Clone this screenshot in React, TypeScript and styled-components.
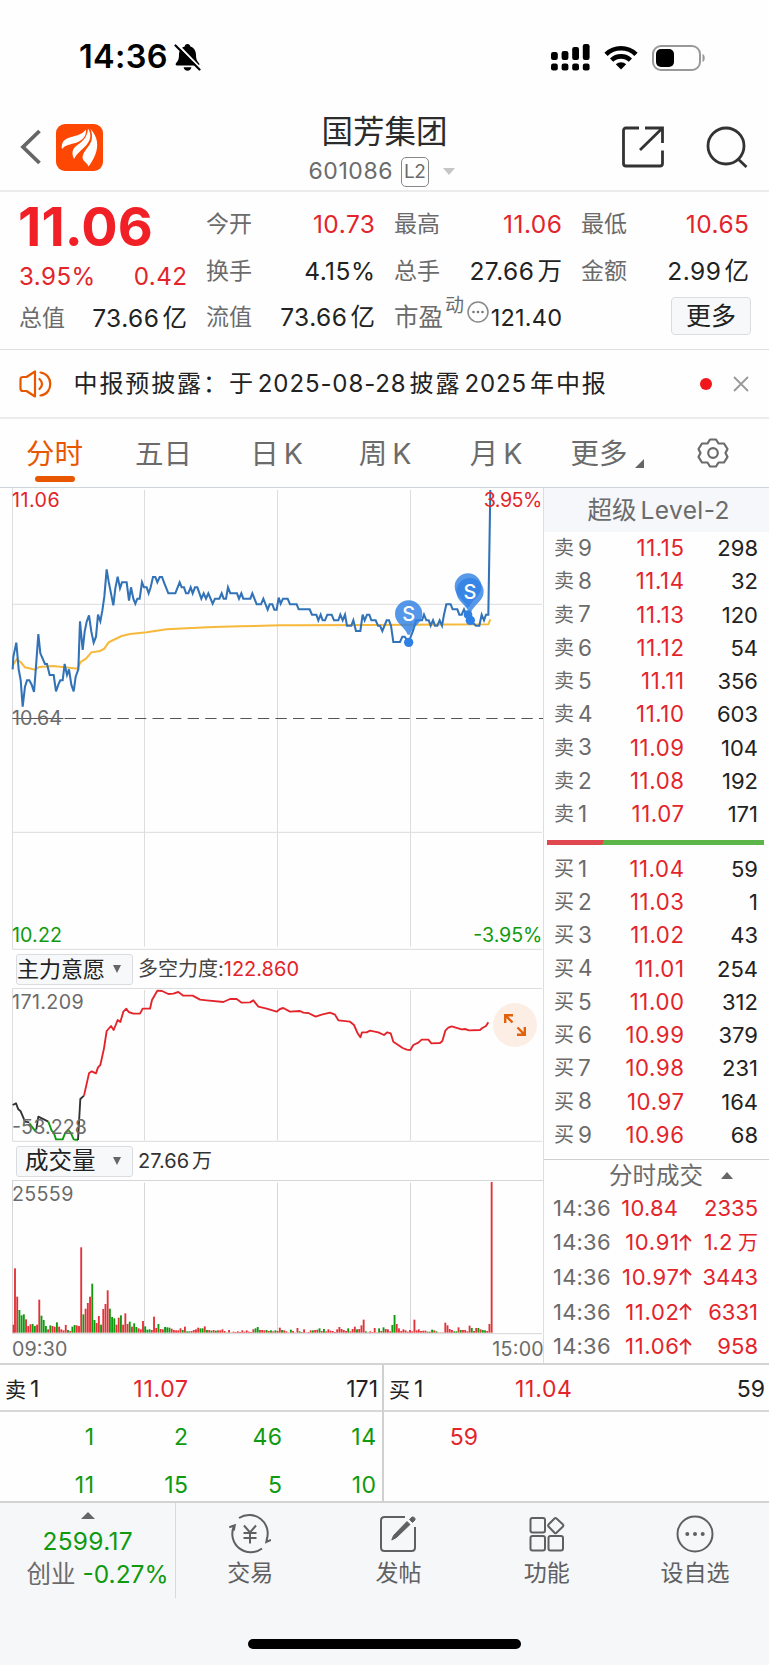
import React from "react";
import styled, { createGlobalStyle } from "styled-components";

const RED = "#e3242b";
const GREEN = "#0f9a0f";
const GREY = "#6b6b6b";
const DARK = "#222222";
const ORANGE = "#e85700";

const GlobalStyle = createGlobalStyle`
  * { box-sizing: border-box; }
  body { margin: 0; background: #fff; }
`;

const Page = styled.div`
  width: 769px;
  height: 1665px;
  display: flex;
  flex-direction: column;
  overflow: hidden;
  background: #fefefe;
  color: ${DARK};
  font-family: Inter, "Noto Sans CJK SC", sans-serif;
  white-space: nowrap;
`;

const Txt = styled.span<{ $c?: string; $s?: number; $ls?: number; $w?: number }>`
  color: ${(p) => p.$c ?? DARK};
  font-size: ${(p) => p.$s ?? 22}px;
  letter-spacing: ${(p) => p.$ls ?? 0}px;
  margin-right: ${(p) => -(p.$ls ?? 0)}px;
  font-weight: ${(p) => p.$w ?? 400};
  line-height: 1;
`;

/* ---------- status bar ---------- */
const StatusBar = styled.div`
  height: 100px;
  flex: none;
  display: flex;
  align-items: center;
  padding: 15px 63px 0 79px;
`;
const StatusIcons = styled.div`
  margin-left: auto;
  display: flex;
  align-items: center;
  gap: 14px;
`;
const BellIcon = styled.svg`
  margin-left: 7px;
`;

/* ---------- title bar ---------- */
const TitleBar = styled.div`
  height: 92px;
  flex: none;
  display: grid;
  grid-template-columns: 200px 1fr 200px;
  border-bottom: 2px solid #ececec;
`;
const TitleLeft = styled.div`
  display: flex;
  align-items: center;
  gap: 14px;
  padding: 4px 0 0 20px;
`;
const TitleMid = styled.div`
  display: flex;
  flex-direction: column;
  align-items: center;
  padding-top: 16px;
`;
const CodeRow = styled.div`
  display: flex;
  align-items: center;
  height: 30px;
  margin-top: 9px;
  padding-right: 6px;
`;
const LevelTag = styled.span`
  width: 28px;
  height: 30px;
  margin: 0 14px 0 8px;
  border: 1.5px solid #888;
  border-radius: 5px;
  color: ${GREY};
  font-size: 19px;
  line-height: 28px;
  text-align: center;
  letter-spacing: -0.5px;
`;
const TitleRight = styled.div`
  display: flex;
  align-items: center;
  justify-content: flex-end;
  gap: 42px;
  padding: 4px 21px 0 0;
`;
const Triangle = styled.i<{ $up?: boolean; $w: number; $h: number; $c: string }>`
  width: 0;
  height: 0;
  border-left: ${(p) => p.$w / 2}px solid transparent;
  border-right: ${(p) => p.$w / 2}px solid transparent;
  ${(p) => (p.$up ? "border-bottom" : "border-top")}: ${(p) => p.$h}px solid ${(p) => p.$c};
`;

/* ---------- quote ---------- */
const Quote = styled.div`
  height: 158px;
  flex: none;
  display: grid;
  grid-template-columns: 168px 169px 168px 168px;
  column-gap: 19px;
  padding: 9px 19px 0 19px;
  border-bottom: 1px solid #dedede;
`;
const QuoteCol = styled.div`
  display: flex;
  flex-direction: column;
`;
const QuoteRow = styled.div<{ $h?: number }>`
  height: ${(p) => p.$h ?? 46.7}px;
  display: flex;
  align-items: center;
  justify-content: space-between;
`;
const LastPrice = styled.div`
  height: 51px;
  margin-left: -1px;
  line-height: 51px;
  font-size: 54px;
  font-weight: 700;
  letter-spacing: 0.1px;
  color: #f02026;
`;
const Unit = styled.span`
  margin-left: 3px;
`;
const PeLabel = styled.span`
  display: flex;
  align-items: center;
`;
const PeSup = styled.span`
  font-size: 19px;
  line-height: 1;
  color: ${GREY};
  margin: -24px 3px 0 2px;
`;
const PeIcon = styled.svg`
  margin-top: -12px;
`;
const MoreButton = styled.button`
  width: 80px;
  height: 38px;
  margin: -4px -2px 0 auto;
  padding: 0;
  border: 1px solid #dcdcdc;
  border-radius: 4px;
  background: #f7f8f9;
  color: ${DARK};
  font: 25px/34px Inter, "Noto Sans CJK SC", sans-serif;
`;

/* ---------- notice ---------- */
const Notice = styled.div`
  height: 69px;
  flex: none;
  display: flex;
  align-items: center;
  padding: 0 20px 0 19px;
  border-bottom: 2px solid #ececec;
`;
const NoticeText = styled.div`
  margin-left: 21.5px;
  font-size: 24px;
  line-height: 30px;
  letter-spacing: 1.9px;
`;
const Dot = styled.i`
  width: 12px;
  height: 12px;
  border-radius: 50%;
  background: #f0161c;
  margin: 0 21px 0 auto;
`;
const Gap = styled.span`
  margin: 0 3px;
  letter-spacing: 0.9px;
`;

/* ---------- tabs ---------- */
const Tabs = styled.div`
  height: 69px;
  flex: none;
  display: flex;
  align-items: center;
  border-bottom: 1px solid #cfd3da;
`;
const Tab = styled.div<{ $w: number; $active?: boolean }>`
  position: relative;
  width: ${(p) => p.$w}px;
  height: 68px;
  line-height: 70px;
  text-align: center;
  font-size: 28.5px;
  color: ${(p) => (p.$active ? ORANGE : GREY)};
  &::after {
    content: "";
    display: ${(p) => (p.$active ? "block" : "none")};
    position: absolute;
    left: 35px;
    bottom: 5px;
    width: 40px;
    height: 6px;
    border-radius: 3px;
    background: ${ORANGE};
  }
`;
const TabIcon = styled.div`
  width: 112px;
  display: flex;
  justify-content: center;
`;
const TabLatin = styled.span`
  margin-left: 5px;
`;
const CornerMark = styled.svg`
  margin: 0 0 -4px 7px;
`;

/* ---------- main ---------- */
const Main = styled.div`
  height: 875px;
  flex: none;
  display: flex;
`;
const Charts = styled.div`
  width: 544px;
  display: flex;
  flex-direction: column;
  position: relative;
  border-right: 1px solid #dcdde0;
`;
const ChartSvg = styled.svg`
  display: block;
  flex: none;
`;
const IndicatorRow = styled.div`
  height: 38px;
  flex: none;
  display: flex;
  align-items: center;
  padding-left: 16px;
`;
const Selector = styled.div<{ $pad: number }>`
  width: 117px;
  height: 31px;
  padding: 0 11px 1px ${(p) => p.$pad}px;
  margin-right: 5px;
  display: flex;
  align-items: center;
  justify-content: space-between;
  border: 1px solid #dadce0;
  border-radius: 3px;
  background: #f7f8fa;
`;
const ExpandButton = styled.button`
  position: absolute;
  left: 493px;
  top: 515px;
  width: 44px;
  height: 44px;
  padding: 0;
  border: 0;
  border-radius: 50%;
  background: #fdeee5;
`;

/* ---------- order book ---------- */
const Book = styled.div`
  flex: 1;
  display: flex;
  flex-direction: column;
`;
const BookTitle = styled.div`
  height: 43.5px;
  flex: none;
  display: flex;
  align-items: center;
  justify-content: center;
  gap: 4px;
  padding: 0 0 0 4px;
  background: #f5f7fb;
`;
const BookRow = styled.div`
  height: 33.25px;
  flex: none;
  display: grid;
  grid-template-columns: 40px 90px 1fr;
  align-items: center;
  padding: 0 11px 0 10px;
  & > :nth-child(n + 2) { text-align: right; }
`;
const Side = styled.span`
  display: flex;
  align-items: center;
  gap: 4px;
`;
const Ratio = styled.div`
  height: 5px;
  flex: none;
  margin: 9px 5px 7.5px 3px;
  background: linear-gradient(110deg, #e0484f 26%, #5cb548 26%);
`;
const TradesTitle = styled.div`
  height: 31.500px;
  flex: none;
  margin-top: 7.500px;
  display: flex;
  align-items: center;
  gap: 18px;
  padding-left: 65px;
  border-top: 1px solid #cfd0d3;
`;
const TradeRow = styled.div`
  height: 34.6px;
  flex: none;
  display: grid;
  grid-template-columns: 58px 1fr 61px;
  align-items: center;
  padding: 0 11px 0 9px;
  & > :last-child { text-align: right; }
`;
const TradePrice = styled.span<{ $up: boolean }>`
  padding-right: ${(p) => (p.$up ? 5 : 19)}px;
  display: flex;
  align-items: center;
  justify-content: flex-end;
`;

/* ---------- queue ---------- */
const Queue = styled.div`
  height: 140px;
  flex: none;
  display: grid;
  grid-template-columns: 384px 385px;
  border-top: 2px solid #d3d3d3;
  border-bottom: 2px solid #d3d3d3;
`;
const QueueSide = styled.div<{ $line?: boolean }>`
  border-right: ${(p) => (p.$line ? 2 : 0)}px solid #d0d0d0;
`;
const QueueHead = styled.div`
  height: 47px;
  display: grid;
  grid-template-columns: 60px 123px 1fr;
  align-items: center;
  padding: 3px 4px 0 5px;
  border-bottom: 2px solid #d8d8d8;
  & > :nth-child(n + 2) { text-align: right; }
`;
const QueueGrid = styled.div`
  display: grid;
  grid-template-columns: repeat(4, 94px);
  grid-auto-rows: 48px;
  align-items: center;
  padding-top: 1px;
  text-align: right;
`;

/* ---------- bottom nav ---------- */
const Nav = styled.div`
  flex: 1;
  display: flex;
  flex-direction: column;
  align-items: center;
  background: #f6f7f9;
`;
const NavItems = styled.div`
  width: 769px;
  height: 95px;
  display: grid;
  grid-template-columns: 176px repeat(4, 148.25px);
`;
const IndexBox = styled.div`
  display: flex;
  flex-direction: column;
  align-items: center;
  padding-top: 9px;
  border-right: 1px solid #d9dadd;
`;
const IndexValue = styled.div`
  height: 34px;
  padding-top: 10px;
  display: flex;
`;
const IndexChange = styled.div`
  display: flex;
  align-items: center;
  gap: 7px;
  height: 34px;
  margin-top: 4px;
  padding-left: 20px;
`;
const NavItem = styled.div`
  display: flex;
  flex-direction: column;
  align-items: center;
  padding-top: 10px;
  gap: 7px;
`;
const HomeBar = styled.i`
  width: 273px;
  height: 10px;
  margin-top: 41px;
  border-radius: 5px;
  background: #000;
`;

/* ---------- data ---------- */
const sells = [
  ["9", "11.15", "298"], ["8", "11.14", "32"], ["7", "11.13", "120"],
  ["6", "11.12", "54"], ["5", "11.11", "356"], ["4", "11.10", "603"],
  ["3", "11.09", "104"], ["2", "11.08", "192"], ["1", "11.07", "171"],
];
const buys = [
  ["1", "11.04", "59"], ["2", "11.03", "1"], ["3", "11.02", "43"],
  ["4", "11.01", "254"], ["5", "11.00", "312"], ["6", "10.99", "379"],
  ["7", "10.98", "231"], ["8", "10.97", "164"], ["9", "10.96", "68"],
];
const trades: [string, boolean, string, string][] = [
  ["10.84", false, "2335", ""], ["10.91", true, "1.2", "万"],
  ["10.97", true, "3443", ""], ["11.02", true, "6331", ""], ["11.06", true, "958", ""],
];

const priceLine =
  "38,568 40,530 49,488 56,568 62,600 68,680 75,620 81,601 88,601 95,614 102,636 108,560 115,462 121,520 128,536 135,552 141,552 149,585 161,585 168,634 175,614 181,601 188,601 194,552 201,585 207,568 214,614 221,634 227,590 235,568 240,424 248,510 254,455 260,425 267,406 274,455 281,488 288,470 294,404 301,424 307,392 313,350 320,268 326,305 333,340 340,376 346,325 353,290 360,325 366,307 380,307 387,362 393,322 400,356 406,371 412,356 419,356 426,307 432,322 440,322 446,340 452,322 459,291 466,291 472,307 479,291 486,291 492,307 505,340 526,340 539,307 545,322 552,322 558,340 565,340 572,322 578,340 585,322 592,322 604,356 611,340 618,356 625,340 638,371 645,356 658,356 665,340 671,356 678,356 684,322 691,340 711,340 717,356 724,340 730,356 751,356 757,340 770,373 783,373 790,356 803,389 809,373 817,373 823,389 830,389 836,353 842,371 849,356 863,356 870,373 890,373 896,388 929,388 936,404 949,404 955,421 962,404 968,421 975,421 982,404 995,404 1002,421 1015,421 1021,404 1028,421 1035,404 1041,437 1054,437 1060,421 1068,453 1081,453 1088,404 1094,421 1101,404 1108,404 1114,421 1127,421 1134,437 1140,437 1147,453 1160,421 1167,421 1173,437 1180,486 1200,486 1207,470 1214,470 1226,487 1234,465 1240,450 1248,421 1266,421 1272,404 1279,421 1286,421 1292,437 1299,421 1305,437 1312,437 1319,421 1326,437 1332,404 1339,373 1352,373 1358,388 1372,388 1378,404 1385,404 1392,388 1399,404 1410,421 1428,437 1438,437 1445,404 1452,421 1458,404 1465,404 1471,30";
const averageLine =
  "38,556 50,538 62,546 75,562 105,569 118,561 160,558 232,566 242,546 258,536 274,517 300,513 313,506 326,487 340,480 365,468 390,462 440,457 500,448 560,445 640,441 720,439 840,436 900,436 1110,435 1230,434 1465,433 1471,418";

const forceSegments = [
  { c: "#333", p: "38,555 48,550 55,568 62,574 75,605 88,607" },
  { c: GREEN, p: "88,610 105,632 109,628" },
  { c: "#333", p: "109,628 115,590 145,605" },
  { c: GREEN, p: "145,605 155,632 161,637 168,658 188,658 195,640 205,630 212,638 221,658 234,660" },
  { c: "#333", p: "234,660 241,537 252,527" },
  {
    c: RED,
    p: "252,527 267,460 275,454 288,460 294,442 301,435 312,385 320,333 333,318 341,330 353,300 361,306 370,275 379,266 386,276 400,281 420,281 428,266 450,266 456,240 472,212 486,213 505,222 520,221 535,216 550,227 578,227 600,239 620,241 670,246 690,237 710,237 725,248 750,247 760,241 775,260 800,266 830,275 840,267 850,264 870,275 900,273 910,278 925,279 947,290 965,284 990,278 1005,284 1015,301 1050,305 1062,315 1073,340 1081,352 1086,337 1100,337 1110,332 1135,337 1152,345 1162,337 1172,340 1180,365 1208,384 1220,389 1231,390 1240,375 1255,368 1265,359 1285,359 1294,370 1320,369 1327,363 1336,332 1345,323 1355,319 1385,328 1395,327 1407,331 1440,330 1447,324 1458,318 1465,307",
  },
];

const volumes = (
  "r24 r193 r108 g68 g52 g55 r40 r20 r25 g26 g20 r24 r99 g51 g38 g20 r10 g22 r20 r18 " +
  "g31 r18 r10 r7 r23 g8 r5 g18 g23 r22 r20 r256 g55 r72 r89 r108 g147 g38 r29 r50 " +
  "g24 r71 r86 r127 g72 g47 g43 r24 r45 g52 r24 r58 r26 g33 r18 g28 g17 r13 r10 r35 " +
  "g19 g9 g10 r8 r48 r14 g26 r11 r10 g17 g16 g15 r12 r8 r7 r7 r13 g8 r18 g4 " +
  "g4 r5 r8 r10 r15 g13 g13 r19 g8 r8 g6 r8 g6 r7 r7 r10 r5 g1 r8 r1 " +
  "r3 r2 r4 r2 r7 r3 r7 r3 r2 r10 g13 g17 r8 r8 r7 g8 r5 g7 r4 g7 " +
  "r5 r15 g8 r7 r4 r1 g9 r5 r1 r14 g4 r2 r10 r1 r2 r7 g7 r8 r9 g13 " +
  "r5 g11 r4 r10 r6 r5 r2 r10 r17 r11 r8 r5 g13 r4 r11 r18 g10 r11 r22 r39 " +
  "g4 r1 r4 r2 r14 r1 g13 r5 g16 r11 r10 r4 g23 g53 r26 r13 r5 r10 r7 r3 " +
  "r8 r4 r39 r7 r10 r5 r6 r6 g3 r3 g9 r7 g4 r1 r1 r1 r30 r22 r11 r8 " +
  "g4 g4 r16 g8 r8 r8 r4 r21 g14 r5 r14 g14 r10 g8 g7 r5 r26 r452"
).split(" ");

const gridX = [433.5, 832.5, 1231.5];

/* ---------- pieces ---------- */
type LabelProps = { x: number; y: number; w: number; c?: string; children: string };
const Label = ({ x, y, w, c = GREY, children }: LabelProps) => (
  <text x={x} y={y} textLength={w} fill={c} fontSize={59}>{children}</text>
);

const Pin = ({ x, y, r, tip, o }: { x: number; y: number; r: number; tip: number; o: number }) => (
  <path
    d={`M${x - r} ${y}A${r} ${r} 0 1 1 ${x + r} ${y}C${x + r} ${y + 28} ${x + 12} ${y + 38} ${x + 3} ${y + tip}H${x - 3}C${x - 12} ${y + 38} ${x - r} ${y + 28} ${x - r} ${y}Z`}
    fill="#2f80e4"
    opacity={o}
  />
);

const PriceChart = () => (
  <ChartSvg width="543" height="462" viewBox="0 24 1629 1386">
    <g stroke="#dddddf" strokeWidth="3">
      <path d="M37.5 24V1408M37 373H1626M37 1057H1626M37 1408H1626" />
      {gridX.map((x) => <path key={x} d={`M${x} 30V1400`} />)}
    </g>
    <path d="M37 715.5H190" stroke="#555" strokeWidth="3" />
    <path d="M194 715.5H1629" stroke="#555" strokeWidth="3.4" strokeDasharray="34 18.7" />
    <polyline points={averageLine} fill="none" stroke="#f6b93b" strokeWidth="6" />
    <polyline points={priceLine} fill="none" stroke="#3273b8" strokeWidth="6.2" strokeLinejoin="miter" />
    <Pin x={1226} y={402} r={41} tip={62} o={0.82} />
    <circle cx="1226" cy="487" r="14" fill="#2f80e4" />
    <circle cx="1404" cy="404" r="13" fill="#2f80e4" />
    <circle cx="1411" cy="421" r="14" fill="#2f80e4" />
    <Pin x={1404} y={320} r={40} tip={62} o={0.8} />
    <Pin x={1410} y={335} r={41} tip={62} o={0.8} />
    <g fill="#fff" fontSize="60" fontWeight="500" textAnchor="middle">
      <text x="1226" y="423">S</text>
      <text x="1410" y="357">S</text>
    </g>
    <Label x={36} y={81} w={143} c={RED}>11.06</Label>
    <Label x={1451} y={81} w={176} c={RED}>3.95%</Label>
    <Label x={36} y={735} w={150}>10.64</Label>
    <Label x={36} y={1387} w={150} c={GREEN}>10.22</Label>
    <Label x={1420} y={1387} w={207} c={GREEN}>-3.95%</Label>
  </ChartSvg>
);

const ForceChart = () => (
  <ChartSvg width="543" height="154" viewBox="0 204 1629 462">
    <g stroke="#dddddf" strokeWidth="3">
      <path d="M37.5 205V664M37 205.500H1626M37 664H1626" />
      {gridX.map((x) => <path key={x} d={`M${x} 210V662`} />)}
    </g>
    {forceSegments.map((s, i) => (
      <polyline key={i} points={s.p} fill="none" stroke={s.c} strokeWidth="5.6" strokeLinejoin="round" />
    ))}
    <Label x={36} y={267} w={215}>171.209</Label>
    <Label x={36} y={642} w={225}>-53.228</Label>
  </ChartSvg>
);

const VolumeChart = () => (
  <ChartSvg width="543" height="184" viewBox="0 90 1629 552">
    <g stroke="#d6d6d9" strokeWidth="3">
      <path d="M37.5 90V552M37 91.500H1629M37 551H1626" />
      {gridX.map((x) => <path key={x} d={`M${x} 98V548`} />)}
    </g>
    {volumes.map((v, i) => {
      const h = Number(v.slice(1));
      return (
        <rect key={i} x={i ? 35.6 + i * 6.62 : 38} y={548 - h} width="5.6" height={h} fill={v[0] === "r" ? "#e2333a" : GREEN} />
      );
    })}
    <Label x={36} y={153} w={184}>25559</Label>
    <Label x={36} y={618} w={166}>09:30</Label>
    <Label x={1477} y={618} w={154}>15:00</Label>
  </ChartSvg>
);

const BookLine = ({ side, row }: { side: string; row: string[] }) => (
  <BookRow>
    <Side>
      <Txt $s={20} $c={GREY}>{side}</Txt>
      <Txt $c={GREY} $s={22.5}>{row[0]}</Txt>
    </Side>
    <Txt $c={RED} $s={22.2} $ls={0.6}>{row[1]}</Txt>
    <Txt>{row[2]}</Txt>
  </BookRow>
);

type StatProps = { label: string; value: string; unit?: string; red?: boolean; h?: number };
const Stat = ({ label, value, unit, red, h }: StatProps) => (
  <QuoteRow $h={h}>
    <Txt $s={23} $c={GREY}>{label}</Txt>
    <Txt $s={24.5} $ls={0.5} $c={red ? RED : DARK}>{value}{unit && <Unit>{unit}</Unit>}</Txt>
  </QuoteRow>
);

export default function App() {
  return (
    <Page>
      <GlobalStyle />
      <StatusBar>
        <Txt $s={32.5} $ls={0.3} $w={600} $c="#000">14:36</Txt>
        <BellIcon width="27" height="29" viewBox="0 0 27 29">
          <path d="M13.5 1c1.7 0 2.6 1 2.8 2.4 4 1.200 5.700 4.600 5.700 8.400 0 5 1.400 6.700 3 8.400.8 1 .3 2.300-1 2.300H3c-1.300 0-1.800-1.300-1-2.300 1.600-1.700 3-3.400 3-8.400 0-3.800 1.700-7.200 5.700-8.400C10.900 2 11.800 1 13.500 1ZM9.600 24.300h7.800c-.4 2-1.900 3.400-3.900 3.400s-3.500-1.400-3.900-3.400Z" />
          <path d="M3.500 1.500 26.500 25.500" stroke="#fff" strokeWidth="2.400" />
          <path d="M1.500 2.500 25.500 26.500" stroke="#000" strokeWidth="2.200" strokeLinecap="round" />
        </BellIcon>
        <StatusIcons>
          <svg width="39" height="27" viewBox="0 0 39 27">
            {[8, 7, 3, 0].map((y, i) => (
              <React.Fragment key={i}>
                <rect x={i * 10.6} y={y} width="6.800" height={16 - y} rx="2.200" />
                <rect x={i * 10.6} y="19.500" width="6.800" height="7" rx="2.200" />
              </React.Fragment>
            ))}
          </svg>
          <svg width="34" height="25" viewBox="0 0 34 25">
            <g fill="none" stroke="#000" strokeWidth="4.600">
              <path d="M2 9.300a21.500 21.500 0 0 1 30 0" />
              <path d="M7.600 15.200a13.500 13.500 0 0 1 18.800 0" />
            </g>
            <path d="M17 24.500 11.800 19.300a7.500 7.500 0 0 1 10.400 0Z" />
          </svg>
          <svg width="54" height="26" viewBox="0 0 54 26">
            <rect x="1" y="1" width="47" height="24" rx="8" fill="none" stroke="#999" strokeWidth="2" />
            <rect x="4" y="4" width="18" height="18" rx="5" />
            <path d="M50.500 9c3 1 3 7 0 8Z" fill="#999" />
          </svg>
        </StatusIcons>
      </StatusBar>

      <TitleBar>
        <TitleLeft>
          <svg width="22" height="36" viewBox="0 0 22 36" fill="none" stroke="#666" strokeWidth="3.800">
            <path d="M19.500 2 3 18 19.500 34" />
          </svg>
          <svg width="47" height="47" viewBox="0 0 47 47">
            <rect width="47" height="47" rx="9" fill="#fd4702" />
            <path d="M6 25C4.500 15 13 13.500 21 11.500 25 10 28 8 30 5.500 30.500 12 27 16 21 18.500 14 20.500 9 21 6 25Z" fill="#fff" />
            <path d="M18 35C14.500 27 17.500 23.500 23.500 19.500 28.500 16 31.500 11 32 4.500 36 11 34.500 16 30.500 21 26 26 21 29 18 35Z" fill="#fff" />
            <path d="M34.500 5C42 13 42.500 22 39.500 30 37.500 35 35 39.500 32.500 42.500 31 38 26.500 37.500 26.500 33 27.500 26.500 33.500 23 35.500 16.500 36.500 12 36 9 34.500 5Z" fill="#fff" />
          </svg>
        </TitleLeft>
        <TitleMid>
          <Txt $s={31.5} $c="#2c2c2c">国芳集团</Txt>
          <CodeRow>
            <Txt $c={GREY} $s={23} $ls={0.6}>601086</Txt>
            <LevelTag>L2</LevelTag>
            <Triangle $w={13} $h={7} $c="#c6c6c6" />
          </CodeRow>
        </TitleMid>
        <TitleRight>
          <svg width="42" height="42" viewBox="0 0 42 42" fill="none" stroke="#333" strokeWidth="2.800">
            <path d="M17 2H4Q1.500 2 1.500 4.500V37.500Q1.500 40 4 40H38Q40.500 40 40.500 37.500V24.500M23 2H40.500V17M40.500 2 18 24" />
          </svg>
          <svg width="42" height="42" viewBox="0 0 42 42" fill="none" stroke="#333" strokeWidth="2.800">
            <circle cx="20" cy="20" r="18" />
            <path d="M31.500 32.500 40.500 41" />
          </svg>
        </TitleRight>
      </TitleBar>

      <Quote>
        <QuoteCol>
          <LastPrice>11.06</LastPrice>
          <QuoteRow $h={50}>
            <Txt $s={24.2} $ls={0.4} $c={RED}>3.95%</Txt>
            <Txt $s={24.2} $ls={0.4} $c={RED}>0.42</Txt>
          </QuoteRow>
          <Stat label="总值" value="73.66" unit="亿" h={32} />
        </QuoteCol>
        <QuoteCol>
          <Stat label="今开" value="10.73" red />
          <Stat label="换手" value="4.15%" />
          <Stat label="流值" value="73.66" unit="亿" />
        </QuoteCol>
        <QuoteCol>
          <Stat label="最高" value="11.06" red />
          <Stat label="总手" value="27.66" unit="万" />
          <QuoteRow>
            <PeLabel>
              <Txt $s={24.5} $c={GREY}>市盈</Txt>
              <PeSup>动</PeSup>
              <PeIcon width="22" height="22" viewBox="0 0 22 22">
                <circle cx="11" cy="11" r="10" fill="none" stroke="#888" strokeWidth="1.500" />
                <g fill="#777"><circle cx="6.500" cy="11" r="1.300" /><circle cx="11" cy="11" r="1.300" /><circle cx="15.500" cy="11" r="1.300" /></g>
              </PeIcon>
            </PeLabel>
            <Txt $s={23.5} $ls={0.2}>121.40</Txt>
          </QuoteRow>
        </QuoteCol>
        <QuoteCol>
          <Stat label="最低" value="10.65" red />
          <Stat label="金额" value="2.99" unit="亿" />
          <QuoteRow>
            <MoreButton>更多</MoreButton>
          </QuoteRow>
        </QuoteCol>
      </Quote>

      <Notice>
        <svg width="33" height="28" viewBox="0 0 33 28" fill="none" stroke={ORANGE} strokeWidth="2.200" strokeLinejoin="round" strokeLinecap="round">
          <path d="M16 1.500V26.500L7.500 21H4Q1.500 21 1.500 18.500V9.500Q1.500 7 4 7H7.500Z" />
          <path d="M20.500 9Q25.500 14 20.500 19M21.500 2.500C34.500 4 34.500 24 21.500 25.500" />
        </svg>
        <NoticeText>
          中报预披露：于<Gap>2025-08-28</Gap>披露<Gap>2025</Gap>年中报
        </NoticeText>
        <Dot />
        <svg width="16" height="16" viewBox="0 0 16 16" stroke="#999" strokeWidth="1.800">
          <path d="M1 1 15 15M15 1 1 15" />
        </svg>
      </Notice>

      <Tabs>
        <Tab $w={109} $active>分时</Tab>
        <Tab $w={109}>五日</Tab>
        <Tab $w={117}>日<TabLatin>K</TabLatin></Tab>
        <Tab $w={100}>周<TabLatin>K</TabLatin></Tab>
        <Tab $w={122}>月<TabLatin>K</TabLatin></Tab>
        <Tab $w={100}>
          更多
          <CornerMark width="9" height="9" viewBox="0 0 9 9"><path d="M9 0V9H0Z" fill="#666" /></CornerMark>
        </Tab>
        <TabIcon>
          <svg width="32" height="30" viewBox="0 0 32 30" fill="none" stroke={GREY} strokeWidth="2.200" strokeLinejoin="round">
            <path d="M13 1.500H19L21.500 5.500H27L30.500 11 28.500 15 30.500 19 27 24.500H21.500L19 28.500H13L10.500 24.500H5L1.500 19 3.500 15 1.500 11 5 5.500H10.500Z" />
            <circle cx="16" cy="15" r="4.800" />
          </svg>
        </TabIcon>
      </Tabs>

      <Main>
        <Charts>
          <PriceChart />
          <IndicatorRow>
            <Selector $pad={0}>
              <Txt $s={22}>主力意愿</Txt>
              <Triangle $w={9} $h={8} $c="#666" />
            </Selector>
            <Txt $s={20} $c="#444">多空力度:</Txt>
            <Txt $s={20} $c={RED}>122.860</Txt>
          </IndicatorRow>
          <ForceChart />
          <IndicatorRow>
            <Selector $pad={8}>
              <Txt $s={23.5}>成交量</Txt>
              <Triangle $w={9} $h={8} $c="#666" />
            </Selector>
            <Txt $s={20} $c="#333">27.66<Unit>万</Unit></Txt>
          </IndicatorRow>
          <VolumeChart />
          <ExpandButton>
            <svg width="44" height="44" viewBox="0 0 44 44" fill="none" stroke="#e0620d" strokeWidth="2.400">
              <path d="M20 12.200H12.200V20M12.200 12.200 19.500 19.500M24.500 24.500 31.800 31.800M31.800 24V31.800H24" />
            </svg>
          </ExpandButton>
        </Charts>

        <Book>
          <BookTitle>
            <Txt $s={24.5} $c={GREY}>超级</Txt>
            <Txt $s={24.5} $ls={0.4} $c={GREY}>Level-2</Txt>
          </BookTitle>
          {sells.map((r) => <BookLine key={r[0]} side="卖" row={r} />)}
          <Ratio />
          {buys.map((r) => <BookLine key={r[0]} side="买" row={r} />)}
          <TradesTitle>
            <Txt $s={23.5} $c={GREY}>分时成交</Txt>
            <Triangle $up $w={12} $h={7} $c="#666" />
          </TradesTitle>
          {trades.map(([price, up, vol, unit]) => (
            <TradeRow key={price}>
              <Txt $c={GREY} $ls={0.2}>14:36</Txt>
              <TradePrice $up={up}>
                <Txt $c={RED} $ls={up ? 0.7 : 0.2}>{price}</Txt>
                {up && (
                  <svg width="13" height="17" viewBox="0 0 13 17" fill="none" stroke={RED} strokeWidth="1.900">
                    <path d="M6.500 16.500V1.500M1 7 6.500 1.500 12 7" />
                  </svg>
                )}
              </TradePrice>
              <Txt $c={RED}>{vol}{unit && <Txt $s={20} $c={RED}> {unit}</Txt>}</Txt>
            </TradeRow>
          ))}
        </Book>
      </Main>

      <Queue>
        <QueueSide $line>
          <QueueHead>
            <Side><Txt $s={21}>卖</Txt><Txt $s={23}>1</Txt></Side>
            <Txt $s={23} $ls={0.7} $c={RED}>11.07</Txt>
            <Txt $s={23}>171</Txt>
          </QueueHead>
          <QueueGrid>
            {["1", "2", "46", "14", "11", "15", "5", "10"].map((v) => <Txt key={v} $s={23} $ls={0.5} $c={GREEN}>{v}</Txt>)}
          </QueueGrid>
        </QueueSide>
        <QueueSide>
          <QueueHead>
            <Side><Txt $s={21}>买</Txt><Txt $s={23}>1</Txt></Side>
            <Txt $s={23} $ls={0.7} $c={RED}>11.04</Txt>
            <Txt $s={23}>59</Txt>
          </QueueHead>
          <QueueGrid>
            <Txt $s={23} $c={RED}>59</Txt>
          </QueueGrid>
        </QueueSide>
      </Queue>

      <Nav>
        <NavItems>
          <IndexBox>
            <Triangle $up $w={14} $h={7} $c="#666" />
            <IndexValue>
              <Txt $s={24.5} $ls={0.3} $c={GREEN}>2599.17</Txt>
            </IndexValue>
            <IndexChange>
              <Txt $s={24.5} $c={GREY}>创业</Txt>
              <Txt $s={24.5} $c={GREEN}>-0.27%</Txt>
            </IndexChange>
          </IndexBox>
          <NavItem>
            <svg width="42" height="42" viewBox="0 0 42 42" fill="none" stroke="#5f6062" strokeWidth="2">
              <path d="M10 5A18.500 18.500 0 0 1 37.500 27M42 26.800 37.300 29 38.300 24.200M33 35.500A18.500 18.500 0 0 1 4.800 13.500M.3 14.200 5.800 12.200 4.800 17.500" />
              <path d="M15 12.500 21 19.500 27 12.500M14.500 20H27.500M14.500 25H27.500M21 19.500V30.500" />
            </svg>
            <Txt $s={23} $c="#5f6062">交易</Txt>
          </NavItem>
          <NavItem>
            <svg width="42" height="42" viewBox="0 0 42 42" fill="none" stroke="#5f6062" strokeWidth="2">
              <path d="M28 4H7.500Q4 4 4 7.500V34.500Q4 38 7.500 38H34.500Q38 38 38 34.500V14" />
              <path d="M16.500 22.500 30 8.500 33 11.500 19.500 24.500 14.800 27Z" fill="#5f6062" strokeWidth="1" />
              <path d="M32.500 6.500 35 4Q37 3.500 38 5.500L38 7 35.500 9.500Z" fill="#5f6062" strokeWidth="1" />
            </svg>
            <Txt $s={23} $c="#5f6062">发帖</Txt>
          </NavItem>
          <NavItem>
            <svg width="42" height="42" viewBox="0 0 42 42" fill="none" stroke="#5f6062" strokeWidth="2" strokeLinejoin="round">
              <rect x="4.500" y="5" width="14.500" height="14.500" rx="2" />
              <rect x="4.500" y="23" width="14.500" height="14.500" rx="2" />
              <rect x="22.500" y="23" width="14.500" height="14.500" rx="2" />
              <path d="M28.500 5.500Q29.500 4.500 30.500 5.500L37 11.500Q37.800 12.500 37 13.500L30.500 19.800Q29.500 20.800 28.500 19.800L22.500 13.500Q21.700 12.500 22.500 11.500Z" />
            </svg>
            <Txt $s={23} $c="#5f6062">功能</Txt>
          </NavItem>
          <NavItem>
            <svg width="42" height="42" viewBox="0 0 42 42" fill="none" stroke="#5f6062" strokeWidth="2">
              <circle cx="21" cy="21" r="17.500" />
              <g fill="#5f6062" stroke="none"><circle cx="13.300" cy="21" r="2" /><circle cx="21" cy="21" r="2" /><circle cx="28.700" cy="21" r="2" /></g>
            </svg>
            <Txt $s={23} $c="#5f6062">设自选</Txt>
          </NavItem>
        </NavItems>
        <HomeBar />
      </Nav>
    </Page>
  );
}
